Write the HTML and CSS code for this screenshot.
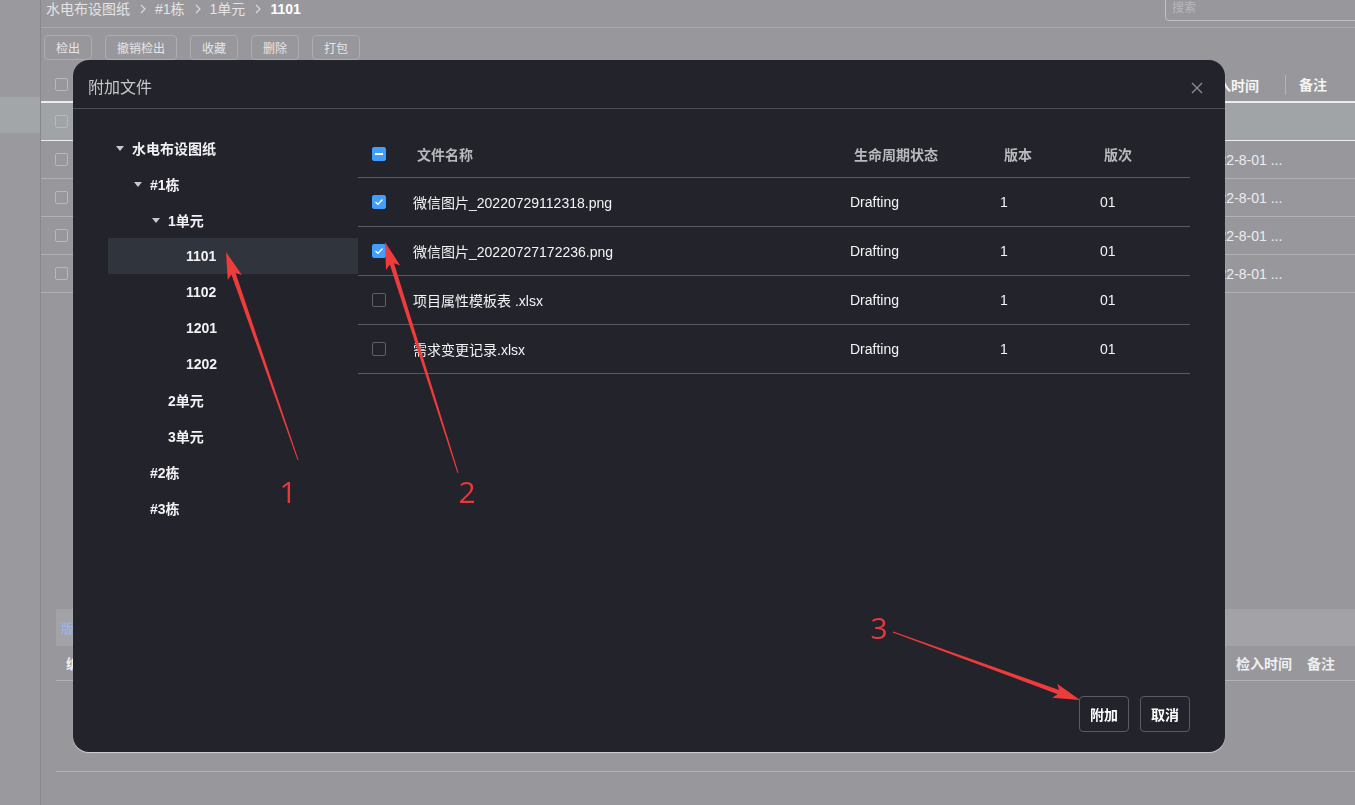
FILE: index.html
```html
<!DOCTYPE html>
<html lang="zh-CN">
<head>
<meta charset="utf-8">
<title>附加文件</title>
<link rel="stylesheet" href="styles.css">
</head>
<body>
<div class="app">
  <aside class="side"><div class="side-active"></div></aside>
  <main class="main">
    <div class="crumbbar">
      <div class="crumb">
        <span>水电布设图纸</span>
        <svg class="chev" width="6" height="10" viewBox="0 0 6 10"><polyline points="1,1 5,5 1,9" fill="none" stroke="#dcdcde" stroke-width="1.1"/></svg>
        <span>#1栋</span>
        <svg class="chev" width="6" height="10" viewBox="0 0 6 10"><polyline points="1,1 5,5 1,9" fill="none" stroke="#dcdcde" stroke-width="1.1"/></svg>
        <span>1单元</span>
        <svg class="chev" width="6" height="10" viewBox="0 0 6 10"><polyline points="1,1 5,5 1,9" fill="none" stroke="#dcdcde" stroke-width="1.1"/></svg>
        <span class="crumb-cur">1101</span>
      </div>
      <div class="search">搜索</div>
    </div>
    <div class="toolbar">
      <button class="tbtn">检出</button>
      <button class="tbtn">撤销检出</button>
      <button class="tbtn">收藏</button>
      <button class="tbtn">删除</button>
      <button class="tbtn">打包</button>
    </div>
    <div class="grid">
      <div class="grow ghead">
        <div class="gchk"><span class="bcb"></span></div>
        <div class="gfill"></div>
        <div class="gdate">检入时间</div>
        <div class="gnote"><span class="gsep">备注</span></div>
      </div>
      <div class="grow gactive">
        <div class="gchk"><span class="bcb"></span></div>
        <div class="gfill"></div>
        <div class="gdate"></div>
        <div class="gnote"></div>
      </div>
      <div class="grow">
        <div class="gchk"><span class="bcb"></span></div>
        <div class="gfill"></div>
        <div class="gdate">2022-8-01 ...</div>
        <div class="gnote"></div>
      </div>
      <div class="grow">
        <div class="gchk"><span class="bcb"></span></div>
        <div class="gfill"></div>
        <div class="gdate">2022-8-01 ...</div>
        <div class="gnote"></div>
      </div>
      <div class="grow">
        <div class="gchk"><span class="bcb"></span></div>
        <div class="gfill"></div>
        <div class="gdate">2022-8-01 ...</div>
        <div class="gnote"></div>
      </div>
      <div class="grow">
        <div class="gchk"><span class="bcb"></span></div>
        <div class="gfill"></div>
        <div class="gdate">2022-8-01 ...</div>
        <div class="gnote"></div>
      </div>
    </div>
    <div class="lower">
      <div class="ltabs"><span class="ltab">版本记录</span></div>
      <div class="lhead">
        <div class="lfill">编号</div>
        <div class="ldate">检入时间</div>
        <div class="lnote">备注</div>
      </div>
      <div class="lbody"></div>
    </div>
  </main>
</div>

<div class="modal">
  <div class="mhead">
    <span class="mtitle">附加文件</span>
    <svg class="mclose" width="12" height="12" viewBox="0 0 12 12"><path d="M1 1L11 11M11 1L1 11" stroke="#8e8e95" stroke-width="1.3"/></svg>
  </div>
  <div class="mbody">
    <div class="tree">
      <div class="node l0"><span class="caret"></span><span>水电布设图纸</span></div>
      <div class="node l1"><span class="caret"></span><span>#1栋</span></div>
      <div class="node l2"><span class="caret"></span><span>1单元</span></div>
      <div class="node l3 sel"><span class="nocaret"></span><span>1101</span></div>
      <div class="node l3"><span class="nocaret"></span><span>1102</span></div>
      <div class="node l3"><span class="nocaret"></span><span>1201</span></div>
      <div class="node l3"><span class="nocaret"></span><span>1202</span></div>
      <div class="node l2"><span class="nocaret"></span><span>2单元</span></div>
      <div class="node l2"><span class="nocaret"></span><span>3单元</span></div>
      <div class="node l1"><span class="nocaret"></span><span>#2栋</span></div>
      <div class="node l1"><span class="nocaret"></span><span>#3栋</span></div>
    </div>
    <div class="ftable">
      <div class="frow fhead">
        <div class="fc c0"><span class="cb ind"></span></div>
        <div class="fc c1">文件名称</div>
        <div class="fc c2">生命周期状态</div>
        <div class="fc c3">版本</div>
        <div class="fc c4">版次</div>
      </div>
      <div class="frow">
        <div class="fc c0"><span class="cb on"><svg width="10" height="8" viewBox="0 0 10 8"><polyline points="1.5,4 4,6.3 8.5,1.5" fill="none" stroke="#fff" stroke-width="1.4"/></svg></span></div>
        <div class="fc c1">微信图片_20220729112318.png</div>
        <div class="fc c2">Drafting</div>
        <div class="fc c3">1</div>
        <div class="fc c4">01</div>
      </div>
      <div class="frow">
        <div class="fc c0"><span class="cb on"><svg width="10" height="8" viewBox="0 0 10 8"><polyline points="1.5,4 4,6.3 8.5,1.5" fill="none" stroke="#fff" stroke-width="1.4"/></svg></span></div>
        <div class="fc c1">微信图片_20220727172236.png</div>
        <div class="fc c2">Drafting</div>
        <div class="fc c3">1</div>
        <div class="fc c4">01</div>
      </div>
      <div class="frow">
        <div class="fc c0"><span class="cb"></span></div>
        <div class="fc c1">项目属性模板表 .xlsx</div>
        <div class="fc c2">Drafting</div>
        <div class="fc c3">1</div>
        <div class="fc c4">01</div>
      </div>
      <div class="frow">
        <div class="fc c0"><span class="cb"></span></div>
        <div class="fc c1">需求变更记录.xlsx</div>
        <div class="fc c2">Drafting</div>
        <div class="fc c3">1</div>
        <div class="fc c4">01</div>
      </div>
    </div>
  </div>
  <div class="mfoot">
    <button class="mbtn">附加</button>
    <button class="mbtn">取消</button>
  </div>
</div>

<svg class="annot" width="1355" height="805" viewBox="0 0 1355 805">
  <g fill="#ee3b3b">
    <polygon transform="translate(226 252) rotate(70.9)" points="0,0 27,-7.5 23,-2.2 220,-0.5 220,0.5 23,2.2 27,7.5"/>
    <polygon transform="translate(385 242) rotate(72.46)" points="0,0 27,-7.5 23,-2.2 242,-0.5 242,0.5 23,2.2 27,7.5"/>
    <polygon transform="translate(1080 700) rotate(200)" points="0,0 27,-7.5 23,-2.2 199,-0.5 199,0.5 23,2.2 27,7.5"/>
  </g>
  <g class="annot-num" fill="#e6393b">
    <text x="288" y="503" text-anchor="middle">1</text>
    <text x="467" y="503" text-anchor="middle">2</text>
    <text x="879" y="639" text-anchor="middle">3</text>
  </g>
</svg>
</body>
</html>
```
FILE: styles.css
```css
* { box-sizing: border-box; }
body {
  margin: 0;
  width: 1355px;
  height: 805px;
  overflow: hidden;
  background: #98979c;
  font-family: "Liberation Sans", "Noto Sans CJK SC", sans-serif;
  color: #ececee;
}
button { font-family: inherit; }

.app { display: flex; height: 805px; }
.side {
  width: 41px;
  flex-shrink: 0;
  background: #9a999d;
  border-right: 1px solid #88878b;
  padding-top: 97px;
}
.side-active { height: 36px; background: #a3a6a8; }

.main {
  flex: 1;
  min-width: 0;
  display: flex;
  flex-direction: column;
  overflow: hidden;
}

.crumbbar {
  display: flex;
  align-items: flex-start;
  height: 28px;
  border-bottom: 1px solid #a9a8ad;
}
.crumb {
  display: flex;
  align-items: center;
  padding-left: 5px;
  font-size: 14px;
  line-height: 18px;
  color: #e4e4e6;
}
.chev { margin: 0 9px 0 10px; }
.crumb-cur { color: #fff; font-weight: bold; }
.search {
  margin-left: auto;
  margin-top: -5px;
  margin-right: -8px;
  width: 198px;
  height: 26px;
  border: 1px solid #c2c1c5;
  border-radius: 4px;
  padding-left: 6px;
  font-size: 12px;
  line-height: 24px;
  color: #b9b8bc;
}

.toolbar {
  display: flex;
  gap: 13px;
  padding-left: 3px;
  margin-top: 7px;
}
.tbtn {
  height: 25px;
  padding: 0 11px;
  font-size: 12px;
  color: #e6e6e8;
  background: transparent;
  border: 1px solid #adacb0;
  border-radius: 4px;
}

.grid { margin-top: 8px; }
.grow {
  display: flex;
  align-items: center;
  height: 38px;
  border-bottom: 1px solid #b2b1b5;
  font-size: 14px;
}
.ghead {
  height: 35px;
  border-bottom: 2px solid #ececee;
  font-weight: bold;
  color: #f4f4f5;
}
.gactive { background: #a1a4a6; border-bottom-color: #eeeeef; height: 38px; }
.gchk { width: 40px; padding-left: 14px; display: flex; }
.bcb {
  width: 13px;
  height: 13px;
  border: 1px solid #b9b8bc;
  border-radius: 2px;
}
.gfill { flex: 1; }
.gdate { width: 96px; padding-left: 14px; white-space: nowrap; overflow: hidden; }
.gnote { width: 70px; }
.gsep {
  display: block;
  border-left: 1px solid #b4b3b7;
  padding-left: 13px;
  line-height: 20px;
}

.lower {
  margin-top: auto;
  margin-left: 15px;
  padding-bottom: 33px;
}
.ltabs {
  height: 37px;
  background: #a3a2a6;
  display: flex;
  align-items: center;
  padding-left: 5px;
  font-size: 13px;
}
.ltab { color: #9ab7ef; }
.lhead {
  display: flex;
  align-items: center;
  height: 35px;
  border-bottom: 1px solid #b3b2b6;
  font-size: 14px;
  font-weight: bold;
  color: #eeeeef;
}
.lfill { flex: 1; padding-left: 10px; }
.ldate { width: 71px; padding-left: 12px; white-space: nowrap; }
.lnote { width: 60px; padding-left: 12px; white-space: nowrap; }
.lbody { height: 91px; border-bottom: 1px solid #b3b2b6; }

/* modal */
.modal {
  position: fixed;
  left: 73px;
  top: 60px;
  width: 1152px;
  height: 692px;
  background: #23232b;
  border-radius: 16px;
  box-shadow: 0 1px 1px rgba(255, 255, 255, 0.55);
  display: flex;
  flex-direction: column;
}
.mhead {
  height: 49px;
  flex-shrink: 0;
  display: flex;
  align-items: center;
  justify-content: space-between;
  padding: 4px 22px 0 15px;
  border-bottom: 1px solid #4e4e56;
}
.mtitle { font-size: 16px; color: #c6c6ca; }
.mclose { margin-top: 4px; }

.mbody {
  flex: 1;
  display: flex;
  padding: 21px 35px 0 35px;
}
.tree { width: 250px; flex-shrink: 0; }
.node {
  height: 36px;
  display: flex;
  align-items: center;
  font-size: 14px;
  font-weight: bold;
  color: #f2f2f4;
}
.node.l0 { padding-left: 4px; }
.node.l1 { padding-left: 22px; }
.node.l2 { padding-left: 40px; }
.node.l3 { padding-left: 58px; }
.node.sel { background: #30343c; }
.caret, .nocaret {
  width: 16px;
  height: 10px;
  margin-right: 4px;
  position: relative;
}
.caret::before {
  content: "";
  position: absolute;
  left: 4px;
  top: 3px;
  border-left: 4px solid transparent;
  border-right: 4px solid transparent;
  border-top: 5px solid #c9c9cd;
}

.ftable { flex: 1; }
.frow {
  display: flex;
  align-items: center;
  height: 49px;
  border-bottom: 1px solid #5a5a62;
  font-size: 14px;
  color: #f4f4f6;
}
.fhead { height: 48px; font-weight: bold; color: #b9b9bd; }
.fc { white-space: nowrap; }
.c0 { width: 42px; padding-left: 14px; display: flex; }
.c1 { width: 438px; padding-left: 13px; }
.c2 { width: 150px; padding-left: 12px; }
.c3 { width: 100px; padding-left: 12px; }
.c4 { width: 102px; padding-left: 12px; }
.fhead .c1 { padding-left: 17px; }
.fhead .c2, .fhead .c3, .fhead .c4 { padding-left: 16px; }

.cb {
  width: 14px;
  height: 14px;
  border: 1px solid #5f5f67;
  border-radius: 2px;
  background: #23232b;
  display: flex;
  align-items: center;
  justify-content: center;
}
.cb.on, .cb.ind { background: #409eff; border-color: #409eff; }
.cb.ind::before {
  content: "";
  width: 8px;
  height: 2px;
  background: #fff;
}

.mfoot {
  display: flex;
  justify-content: flex-end;
  gap: 11px;
  padding: 0 35px 20px;
}
.mbtn {
  height: 36px;
  padding: 0 10px;
  border: 1px solid #5b5b63;
  border-radius: 4px;
  background: transparent;
  color: #fff;
  font-size: 14px;
  font-weight: bold;
}

.annot {
  position: fixed;
  left: 0;
  top: 0;
  pointer-events: none;
}
.annot-num text {
  font-family: "Open Sans", "Liberation Sans", sans-serif;
  font-size: 30px;
}
```
